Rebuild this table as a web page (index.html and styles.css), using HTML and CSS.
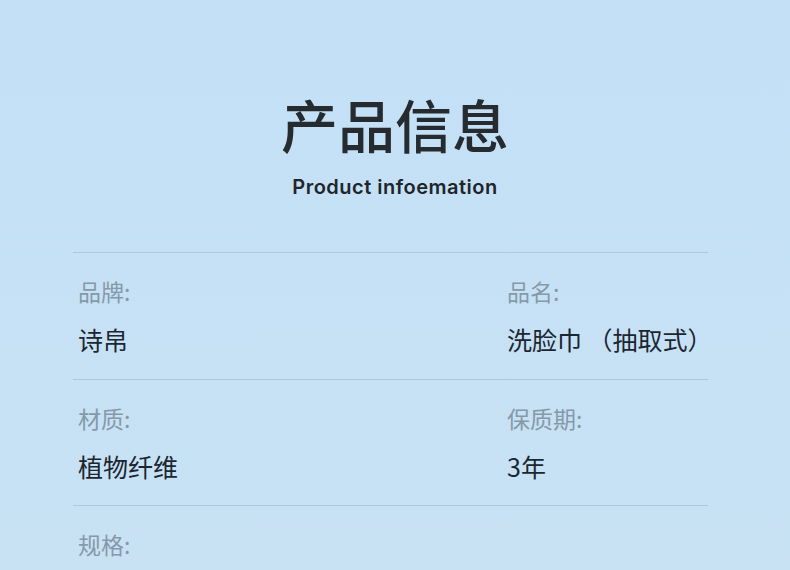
FILE: index.html
```html
<!DOCTYPE html>
<html lang="zh">
<head>
<meta charset="utf-8">
<link rel="stylesheet" href="styles.css">
</head>
<body>
<div class="page">
  <header class="head">
    <h1 class="title">产品信息</h1>
    <p class="subtitle">Product infoemation</p>
  </header>
  <section class="table">
    <div class="row">
      <div class="cell"><div class="label">品牌:</div><div class="value">诗帛</div></div>
      <div class="cell"><div class="label">品名:</div><div class="value">洗脸巾 （抽取式）</div></div>
    </div>
    <div class="row">
      <div class="cell"><div class="label">材质:</div><div class="value">植物纤维</div></div>
      <div class="cell"><div class="label">保质期:</div><div class="value">3年</div></div>
    </div>
    <div class="row">
      <div class="cell"><div class="label">规格:</div><div class="value">&nbsp;</div></div>
      <div class="cell"></div>
    </div>
  </section>
</div>
</body>
</html>
```

FILE: styles.css
```css
html, body {
  margin: 0;
  padding: 0;
}
body {
  width: 790px;
  height: 570px;
  overflow: hidden;
  background: linear-gradient(180deg, #c3e0f7 0%, #c6e1f5 50%, #c8e2f4 100%);
  font-family: "Noto Sans CJK SC", "Noto Sans", sans-serif;
}
.page {
  padding-top: 90px;
}
.head {
  text-align: center;
}
.title {
  margin: 0;
  font-size: 57px;
  line-height: 66px;
  font-weight: 500;
  color: #262b30;
}
.subtitle {
  margin: 18px 0 0;
  font-family: "Inter", "Liberation Sans", sans-serif;
  font-size: 20px;
  line-height: 26px;
  font-weight: 600;
  letter-spacing: 0.5px;
  color: #1f252b;
}
.table {
  margin: 52px 82px 0 73px;
}
.row {
  display: grid;
  grid-template-columns: 429px 1fr;
  border-top: 1px solid #aec7dc;
  height: 125.5px;
}
.cell {
  padding: 22px 0 0 5px;
}
.label {
  font-size: 23px;
  line-height: 32px;
  color: #8599a8;
  font-weight: 400;
}
.value {
  margin-top: 15px;
  font-size: 25px;
  line-height: 34px;
  color: #1c2631;
}
```
